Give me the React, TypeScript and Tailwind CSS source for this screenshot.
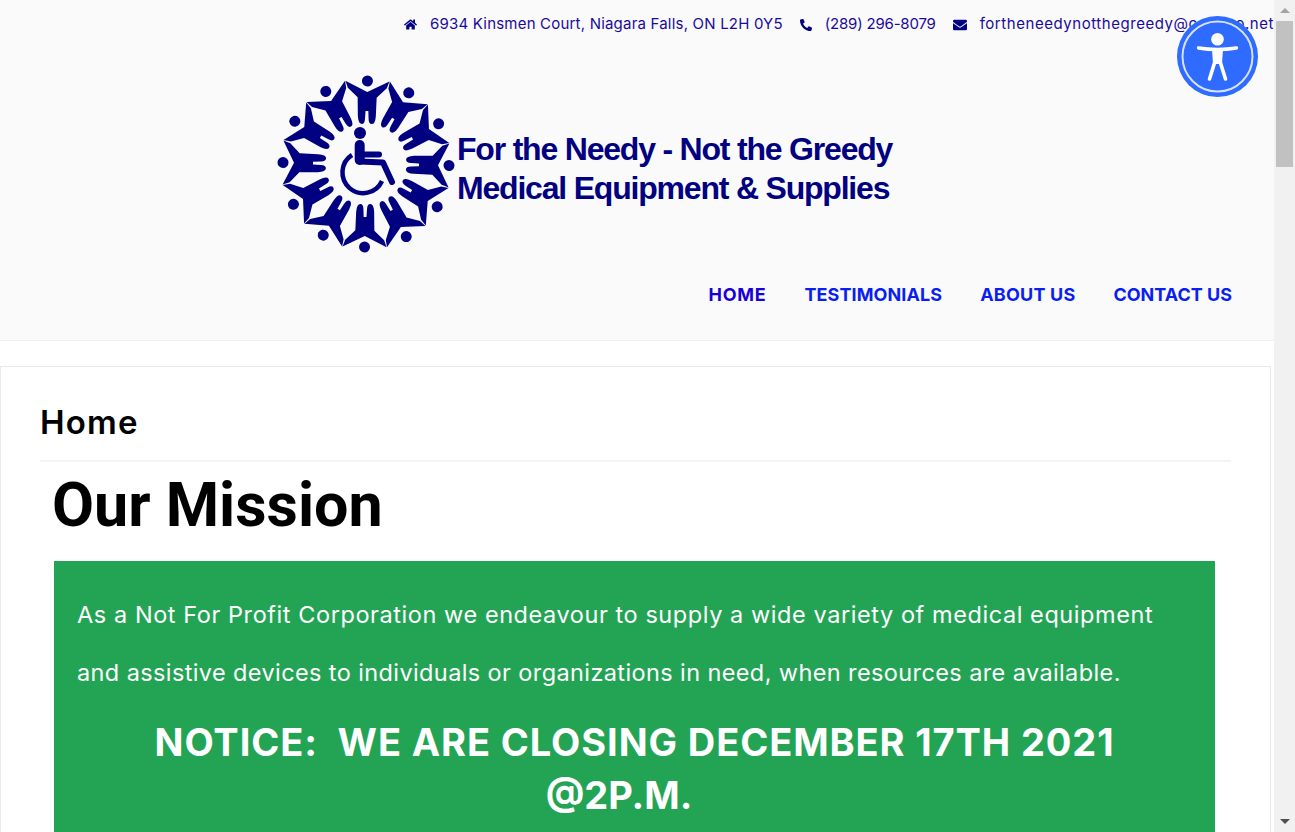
import { FaHome, FaPhone, FaEnvelope } from 'react-icons/fa'

const FIGURE =
  'M0,-72 L22,-83 L19.5,-76 L9.5,-66.5 L9,-48 Q8.5,-40 5,-40 Q2,-40 1.8,-45 L1.4,-53 L-1.4,-53 L-1.8,-45 Q-2,-40 -5,-40 Q-8.5,-40 -9,-48 L-9.5,-66.5 L-19.5,-76 L-22,-83 Z'

const ANGLES = [1, 31, 61, 91, 121, 151, 181, 211, 241, 271, 301, 331]

function Logo() {
  return (
    <svg viewBox="-90 -90 180 180" className="w-[180px] h-[180px] shrink-0">
      {ANGLES.map(a => (
        <g key={a} transform={`rotate(${a})`} fill="#000080">
          <path d={FIGURE} />
          <circle cx="0" cy="-83" r="5.5" />
        </g>
      ))}
      {/* wheelchair */}
      <circle cx="-6" cy="-31" r="6" fill="#000080" />
      <path d="M-6.3,-19 L-6.3,-4" fill="none" stroke="#000080" strokeWidth="10" strokeLinecap="round" />
      <path
        d="M-6,-2.5 L17,-1.5 L26,18 M-6,-9.5 L13,-9.5"
        fill="none"
        stroke="#000080"
        strokeWidth="6"
        strokeLinecap="round"
        strokeLinejoin="round"
      />
      <path d="M-14,-9 A20.7,20.7 0 1 0 16,17" fill="none" stroke="#000080" strokeWidth="4.5" />
    </svg>
  )
}

function AccessIcon() {
  return (
    <div className="absolute left-[1177px] top-[16px] w-[81px] h-[81px] rounded-full bg-[#2f6bff]">
      <svg viewBox="0 0 81 81" className="w-[81px] h-[81px]">
        <circle cx="40.5" cy="40.5" r="35" fill="none" stroke="#d5e2ff" strokeWidth="2" />
        <circle cx="40.5" cy="23.3" r="6.3" fill="#fff" />
        <path d="M21.5,32 Q40.5,35 59.5,32" fill="none" stroke="#fff" strokeWidth="3.4" strokeLinecap="round" />
        <path d="M35,33 L46,33 L45,48 L36,48 Z" fill="#fff" />
        <path
          d="M37.5,47 L32.5,63 M43.5,47 L48.5,63"
          fill="none"
          stroke="#fff"
          strokeWidth="3.6"
          strokeLinecap="round"
        />
      </svg>
    </div>
  )
}

function Scrollbar() {
  return (
    <div className="w-[21px] h-[832px] bg-[#f1f1f1] shrink-0 flex flex-col items-center">
      <div className="h-[21px] flex items-center justify-center">
        <div className="w-0 h-0 border-x-[5px] border-x-transparent border-b-[5px] border-b-[#a3a3a3]" />
      </div>
      <div className="w-[17px] h-[146px] bg-[#c1c1c1]" />
      <div className="flex-1" />
      <div className="h-[21px] flex items-center justify-center">
        <div className="w-0 h-0 border-x-[5px] border-x-transparent border-t-[5px] border-t-[#505050]" />
      </div>
    </div>
  )
}

export default function App() {
  return (
    <div className="relative flex w-[1295px] h-[832px] overflow-hidden bg-white font-['Inter',sans-serif]">
      <div className="w-[1274px] shrink-0">
        {/* Header */}
        <header className="h-[341px] bg-[#fafafa] border-b border-[#eeeeee] flex flex-col">
          <div className="h-[49px] flex items-center justify-end text-[15px] text-[#1a0a9c] whitespace-nowrap">
            <FaHome className="w-[13px] h-[13px] text-[#000080]" />
            <span className="ml-[13px] tracking-[0.2px]">6934 Kinsmen Court, Niagara Falls, ON L2H 0Y5</span>
            <FaPhone className="ml-[17px] w-[12px] h-[12px] text-[#000080] -scale-x-100" />
            <span className="ml-[13px] tracking-[-0.2px]">(289) 296-8079</span>
            <FaEnvelope className="ml-[17px] w-[14px] h-[14px] text-[#000080]" />
            <span className="ml-[13px] tracking-[0.55px]">fortheneedynotthegreedy@cogeco.net</span>
          </div>
          <div className="flex items-center pl-[276px] pt-[25px]">
            <Logo />
            <div className="ml-[1px] mt-[10px] font-['Liberation_Sans',sans-serif] font-bold text-[32px] leading-[39px] tracking-[-1.2px] text-[#000080] whitespace-nowrap">
              <div>For the Needy - Not the Greedy</div>
              <div>Medical Equipment &amp; Supplies</div>
            </div>
          </div>
          <nav className="mt-[27px] flex justify-end gap-[38px] pr-[42px] text-[18px] font-bold whitespace-nowrap text-[#0a1ef0]">
            <span className="text-[#1a00d8] tracking-[0.7px]">HOME</span>
            <span className="tracking-[0.1px]">TESTIMONIALS</span>
            <span className="tracking-[0.2px]">ABOUT US</span>
            <span>CONTACT US</span>
          </nav>
        </header>

        {/* Card */}
        <main className="mt-[25px] ml-0 w-[1271px] border border-[#e9e9e9] bg-white pt-[34px] px-[39px]">
          <div className="pb-[17px] border-b-2 border-[#f4f4f4]">
            <h2 className="text-[33px] leading-[42px] font-semibold tracking-[1.2px] text-black">Home</h2>
          </div>
          <div className="pl-[14px] pr-[16px]">
            <h1 className="font-['Roboto',sans-serif] font-bold text-[61px] leading-[80px] ml-[-2px] mt-[3px] text-black">
              Our Mission
            </h1>
            <section className="mt-[16px] bg-[#23a455] text-white px-[23px] pt-[25px] pb-[40px]">
              <p className="text-[23.5px] leading-[58px]">
                <span className="block tracking-[0.57px]">
                  As a Not For Profit Corporation we endeavour to supply a wide variety of medical equipment
                </span>
                <span className="block tracking-[0.39px]">
                  and assistive devices to individuals or organizations in need, when resources are available.
                </span>
              </p>
              <p className="mt-[14px] text-[38px] leading-[53px] font-bold text-center tracking-[0.9px]">
                NOTICE:&nbsp; WE ARE CLOSING DECEMBER 17TH 2021
                <span className="block pr-[31px] tracking-[0px]">@2P.M.</span>
              </p>
            </section>
          </div>
        </main>
      </div>
      <Scrollbar />
      <AccessIcon />
    </div>
  )
}
